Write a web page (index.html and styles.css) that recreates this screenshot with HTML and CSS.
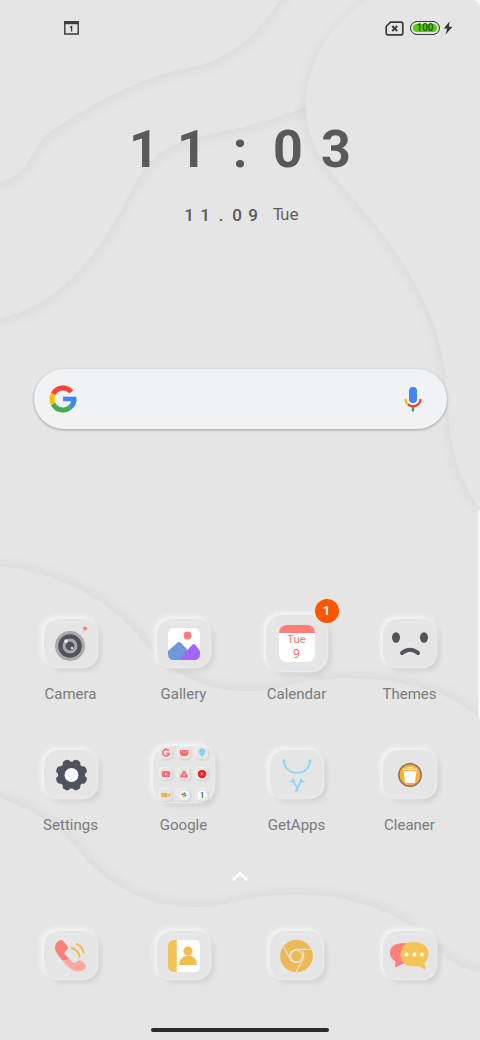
FILE: index.html
```html
<!DOCTYPE html>
<html lang="en">
<head>
<meta charset="utf-8">
<meta name="viewport" content="width=device-width, initial-scale=1">
<title>Home screen</title>
<link rel="stylesheet" href="styles.css">
</head>
<body>
<svg class="wallpaper" viewBox="0 0 480 1040" preserveAspectRatio="none" aria-hidden="true">
  <path class="wave wave-down" d="M-30-30H500V80C400 80 350 92 305 107C230 138 180 130 150 162C125 190 120 230 70 280Q38 310 0 318H-30Z"/>
  <path class="wave wave-down" d="M-30-30H296Q288-8 280 0C255 36 234 55 198 66C150 73 95 100 46 135C30 150 30 175 0 182H-30Z"/>
  <path class="wave wave-left" d="M510-30H400Q380-12 365 0C325 32 306 66 306 107C306 170 370 200 413 280C442 330 446 365 449 420C452 455 461 482 480 508H510Z"/>
  <path class="wave wave-up" d="M-30 562L0 566C65 575 108 600 140 638C180 690 240 700 290 685C360 668 450 685 480 720V1070H-30Z"/>
  <path class="wave wave-up" d="M-30 788L0 798C45 815 63 830 82 855C120 900 180 917 235 902C300 885 370 899 410 925C440 952 455 970 480 972H510V1070H-30Z"/>
  <path fill="#f5f5f5" d="M478 510h2v210l-2-4zM473 0h7v6q-2-5-7-6z"/>
</svg>

<div class="screen">
  <header class="status">
    <svg width="15" height="14" viewBox="0 0 15 14" role="img" aria-label="Calendar notification"><path d="M.8 1h13.400v12H.8z" fill="none" stroke="#3b3b3b" stroke-width="1.400"/><path d="M.2.2h14.600v3H.2z" fill="#3b3b3b"/><path d="M6 6.300l1.600-.7v5" fill="none" stroke="#3b3b3b" stroke-width="1.300"/></svg>
    <div class="status-right">
      <svg width="19" height="15" viewBox="0 0 19 15" role="img" aria-label="No SIM"><path d="M5.500 1.200H16q1.800 0 1.800 1.800v9q0 1.800-1.800 1.800H3q-1.800 0-1.800-1.800V5.500z" fill="none" stroke="#3b3b3b" stroke-width="1.700"/><path d="M7.200 5l5 5m0-5l-5 5" stroke="#3b3b3b" stroke-width="1.900"/></svg>
      <span class="battery">100</span>
      <svg width="10" height="14" viewBox="0 0 10 14" role="img" aria-label="Charging"><path d="M6.500.5L.8 7.500h3.400L2.600 13.500 9.500 5.800H5.900z" fill="#333"/></svg>
    </div>
  </header>

  <main>
    <section class="clock" aria-label="Clock">
      <time class="time"><span>1</span><span>1</span><span>:</span><span>0</span><span>3</span></time>
      <div class="date"><span class="digits"><span>1</span><span>1</span><span>.</span><span>0</span><span>9</span></span> <span class="weekday">Tue</span></div>
    </section>

    <form class="search">
      <svg width="28" height="28" viewBox="0 0 28 28" fill="none" stroke-width="5" aria-hidden="true"><path d="M22.400 6.900A11 11 0 0 0 4.200 9" stroke="#fa4336"/><path d="M4.200 9A11 11 0 0 0 4.200 19" stroke="#fbbc05"/><path d="M4.200 19A11 11 0 0 0 21.100 22.400" stroke="#43ac52"/><path d="M21.100 22.400A11 11 0 0 0 25 14" stroke="#4285f4"/><path d="M14 11.700h13.300v4.600H14z" fill="#4285f4" stroke="none"/></svg>
      <input type="search" aria-label="Search">
      <button type="button" aria-label="Voice search"><svg width="20" height="28" viewBox="0 0 20 28" fill="none"><rect x="6" y="2" width="8" height="16" rx="4" fill="#4285f4"/><path d="M2.500 14q0 3.500 2.500 5.500" stroke="#fbbc05" stroke-width="2.200"/><path d="M5 19.500q5 3.600 10 0 2.500-2 2.500-5.500" stroke="#ea4335" stroke-width="2.200"/><path d="M10 22v4.500" stroke="#34a853" stroke-width="2.400"/></svg></button>
    </form>

    <nav class="apps" aria-label="Apps">
      <button class="app"><span class="slot"><span class="tile">
        <svg viewBox="0 0 54 49"><circle cx="26" cy="27" r="15" fill="#aaa"/><circle cx="26" cy="27" r="11.800" fill="#50525a"/><circle cx="26" cy="27" r="7.500" fill="#a7a7a7"/><circle cx="26" cy="27" r="4.400" fill="#50525a"/><circle cx="22" cy="22" r="1.800" fill="#eee"/><circle cx="28" cy="29" r="1.300" fill="#ddd"/><circle cx="41" cy="9.500" r="2" fill="#fb7c78"/></svg>
      </span></span><span class="label">Camera</span></button>

      <button class="app"><span class="slot"><span class="tile">
        <svg viewBox="0 0 54 49"><rect x="11" y="9" width="32" height="32" rx="6" fill="#fff"/><circle cx="30.500" cy="16.500" r="3.900" fill="#f97c7a"/><path d="M11 32l9-8q2-2 4 0l9 9-8 8h-8q-6 0-6-6z" fill="#7197d8"/><path d="M23 41q1-3 4-6l8-9q2-2 3.500 0l4.500 6v3q0 6-6 6z" fill="#a066f7"/></svg>
      </span></span><span class="label">Gallery</span></button>

      <button class="app"><span class="slot"><span class="tile large">
        <span class="calendar"><span>Tue</span><span class="day">9</span></span>
      </span><span class="badge">1</span></span><span class="label">Calendar</span></button>

      <button class="app"><span class="slot"><span class="tile">
        <svg viewBox="0 0 54 49" fill="#50525c"><ellipse cx="13" cy="18.500" rx="4" ry="5.200"/><ellipse cx="41" cy="18.500" rx="4" ry="5.200"/><path d="M19 34q8-6.500 16 0" fill="none" stroke="#50525c" stroke-width="4" stroke-linecap="round"/></svg>
      </span></span><span class="label">Themes</span></button>

      <button class="app"><span class="slot"><span class="tile">
        <svg viewBox="0 0 54 49"><g fill="#50525c" transform="translate(27.500 25)"><circle r="13.500"/><rect x="-4" y="-16" width="8" height="32" rx="3.500" transform="rotate(22.500)"/><rect x="-4" y="-16" width="8" height="32" rx="3.500" transform="rotate(67.500)"/><rect x="-4" y="-16" width="8" height="32" rx="3.500" transform="rotate(112.500)"/><rect x="-4" y="-16" width="8" height="32" rx="3.500" transform="rotate(157.500)"/><circle r="7" fill="#f8fafc"/></g></svg>
      </span></span><span class="label">Settings</span></button>

      <button class="app"><span class="slot"><span class="tile large folder">
        <svg viewBox="0 0 12 12"><path d="M8.800 3.800A3.300 3.300 0 1 0 9.300 6.500H6.300" fill="none" stroke="#f76d70" stroke-width="1.600"/></svg>
        <svg viewBox="0 0 12 12"><path d="M2 3h8.500v3.500Q10 9 7.500 9H5Q2 9 2 6z" fill="#f76d70"/><path d="M3 4.500q3.300 2 6.500 0" stroke="#ffa1a0" fill="none"/></svg>
        <svg viewBox="0 0 12 12"><path d="M6 11V9Q3.200 6.500 3.200 4.700a2.800 2.800 0 0 1 5.600 0Q8.800 6.500 6 9" fill="#83cdfa" stroke="#83cdfa" stroke-width=".7"/><circle cx="6" cy="4.800" r="1" fill="#a5dcfc"/></svg>
        <svg viewBox="0 0 12 12"><rect x="1.800" y="3" width="8.400" height="6" rx="1.500" fill="#f76d70"/><path d="M5 4.500v3L7.500 6z" fill="#ffd9d9"/></svg>
        <svg viewBox="0 0 12 12"><path d="M6 3.500L9 8.500H3z" fill="none" stroke="#f76d70" stroke-width="2" stroke-linejoin="round"/></svg>
        <svg viewBox="0 0 12 12"><circle cx="6" cy="6" r="4" fill="#f60c12"/><circle cx="6" cy="6" r="2" fill="none" stroke="#ff7776" stroke-width=".6"/><path d="M5.200 4.800v2.400L7.200 6z" fill="#fff"/></svg>
        <svg viewBox="0 0 12 12"><path d="M1.500 4h6v4.200h-6zM8 5.600L10.500 4v4L8 6.700z" fill="#ebb551"/></svg>
        <svg viewBox="0 0 12 12"><circle cx="6" cy="6" r="4.500" fill="#fff"/><path d="M6 6V3l2.500 2z" fill="#34a853"/><path d="M6 6h3L7 8.500z" fill="#4285f4"/><path d="M6 6v3L3.500 7z" fill="#fbbc05"/><path d="M6 6H3l2-2.500z" fill="#ea4335"/></svg>
        <svg viewBox="0 0 12 12"><circle cx="6" cy="6" r="4.500" fill="#fff"/><path d="M4.700 4.300L6.200 3.500" stroke="#fbbc05" stroke-width="1.400"/><path d="M6.400 3v3" stroke="#4285f4" stroke-width="1.500"/><path d="M6.400 6v3" stroke="#34a853" stroke-width="1.500"/></svg>
      </span></span><span class="label">Google</span></button>

      <button class="app"><span class="slot"><span class="tile">
        <svg viewBox="0 0 54 49" fill="none" stroke="#8bd4fc" stroke-width="1.700" stroke-linecap="round"><path d="M14 11a13 12 0 0 0 26 0"/><circle cx="14" cy="11" r=".8"/><circle cx="40" cy="11" r=".8"/><path d="M23 30.500l4.500 8M31.500 30.500l-5 9.500M20.500 31.500l3 .5v-3M34 31.500l-3 .5v-3M25.800 40.500h2"/></svg>
      </span></span><span class="label">GetApps</span></button>

      <button class="app"><span class="slot"><span class="tile">
        <svg viewBox="0 0 54 49"><circle cx="27" cy="25" r="11.200" fill="#fbb034" stroke="#8d706b" stroke-width="1.500"/><path d="M20.500 21L22 32q.2 1 1.200 1h7.600q1 0 1.200-1l1.500-11z" fill="#fff"/><path d="M20 19.400h14M24 17.700h6" stroke="#fff1d5" stroke-width="1.200"/></svg>
      </span></span><span class="label">Cleaner</span></button>
    </nav>

    <button class="drawer" aria-label="Open app drawer"><svg width="18" height="12" viewBox="0 0 18 12"><path d="M2.500 9.500L9 3l6.500 6.500" fill="none" stroke="#fff" stroke-width="2.600" stroke-linecap="round"/></svg></button>
  </main>

  <nav class="dock" aria-label="Dock">
    <button class="app" aria-label="Phone"><span class="slot"><span class="tile">
      <svg viewBox="0 0 54 49"><path d="M14.500 10q2.500-2 4.500 0l4 4.500q1.500 2 0 4l-2 2q-1.200 1.500 0 3l6 6H18.500q-6.500-7-7.500-12-.5-5 3.500-7.500z" fill="#fd7f7a"/><path d="M18.500 29.500L25 27.500l4 4q1.500 1.200 3 0l2-1.500q2-1.500 4 0l3.500 4q1.500 2-.5 4-7 5-14 0-5.500-4-8.500-8.500z" fill="#fda7a3"/><path d="M28 17q6.500 2 7.500 8.500M32.500 13q6 2.500 7 8.500" fill="none" stroke="#ecba58" stroke-width="1.900" stroke-linecap="round"/></svg>
    </span></span></button>
    <button class="app" aria-label="Contacts"><span class="slot"><span class="tile">
      <svg viewBox="0 0 54 49"><rect x="11" y="9" width="32" height="32" rx="5.500" fill="#fff"/><path d="M19.800 9v32H17q-6 0-6-6V15q0-6 6-6z" fill="#f3c35b"/><circle cx="31" cy="20" r="4.600" fill="#f1bd53"/><path d="M22 34q.5-9 9-9.500 9 .5 9 9.500z" fill="#f1bd53"/></svg>
    </span></span></button>
    <button class="app" aria-label="Chrome"><span class="slot"><span class="tile">
      <svg viewBox="0 0 54 49"><circle cx="26.500" cy="25" r="16.300" fill="#ecb957"/><g fill="none" stroke="#e7e0d2" stroke-width="1.300"><circle cx="26.500" cy="25" r="5.800"/><path d="M42 18.300H26.500q-7 1-7 8M13.500 15.500L20 28q3 4.500 9 3.200M33 20q2 6-2 11.400L26 41.200"/></g></svg>
    </span></span></button>
    <button class="app" aria-label="Messages"><span class="slot"><span class="tile">
      <svg viewBox="0 0 54 49"><path d="M21 12q8 0 8 10t-9 11l-8 3.500.5-6Q7 27 7 22q0-10 14-10z" fill="#fd7f7a"/><path d="M31.500 11Q45.500 12 45.500 23.500 45 29 41.500 32l1 7-7-4q-18 2-18-11.500Q18 11 31.500 11z" fill="#f4c456"/><g fill="#fff"><circle cx="23.500" cy="23.500" r="1.900"/><circle cx="31.500" cy="23.500" r="1.900"/><circle cx="39" cy="23.500" r="1.900"/></g></svg>
    </span></span></button>
  </nav>
  <div class="home-bar"></div>
</div>
</body>
</html>
```

FILE: styles.css
```css
* { box-sizing: border-box; }

body {
  margin: 0;
  background: #e5e5e5;
  color: #7b7b7b;
  font-family: Roboto, "Liberation Sans", sans-serif;
}

button {
  padding: 0;
  border: 0;
  background: none;
  color: inherit;
  font: inherit;
}

svg { display: block; }

.wallpaper {
  position: absolute;
  inset: 0;
  width: 100%;
  height: 100%;
}

.wave { fill: #e5e5e5; }
.wave-down { filter: drop-shadow(2px 4px 6px rgba(0, 0, 0, .04)); }
.wave-left { filter: drop-shadow(-3px 2px 6px rgba(0, 0, 0, .04)); }
.wave-up { filter: drop-shadow(2px -4px 6px rgba(0, 0, 0, .04)); }

.screen {
  position: relative;
  display: flex;
  flex-direction: column;
  min-height: 100vh;
  padding-bottom: 8px;
}

.status {
  display: flex;
  justify-content: space-between;
  align-items: center;
  height: 56px;
  padding: 0 27px 0 64px;
}

.status-right {
  display: flex;
  align-items: center;
  gap: 6px;
}

.battery {
  width: 30px;
  height: 14px;
  border: 1px solid #3b3b3b;
  border-radius: 7px;
  background: #55cc10;
  box-shadow: inset 0 0 0 2px #e5e5e5;
  color: #235006;
  font-size: 10px;
  font-weight: 500;
  line-height: 12px;
  text-align: center;
}

.battery + svg { margin-left: -3px; }

.clock {
  display: flex;
  flex-direction: column;
  align-items: center;
  gap: 24px;
  padding-top: 64px;
  color: #595959;
}

.time {
  display: grid;
  grid-template-columns: repeat(5, 48px);
  font-size: 52px;
  font-weight: 700;
  line-height: 60px;
  text-align: center;
}

.date {
  display: flex;
  gap: 12px;
  font-size: 17px;
  font-weight: 500;
  line-height: 22px;
}

.digits {
  display: grid;
  grid-template-columns: repeat(5, 16px);
  text-align: center;
}

.weekday {
  font-family: "DejaVu Sans", sans-serif;
  font-size: 15px;
  font-weight: 400;
}

.search {
  display: flex;
  align-items: center;
  height: 60px;
  margin: 143px 33px 0 34px;
  padding: 0 24px 0 15px;
  border-radius: 30px;
  background: #f1f2f4;
  box-shadow: 0 1px 3px rgba(0, 0, 0, .3);
}

.search input {
  flex: 1;
  min-width: 0;
  height: 40px;
  border: 0;
  outline: 0;
  background: none;
  font: inherit;
}

.apps,
.dock {
  display: grid;
  grid-template-columns: repeat(4, 1fr);
  padding: 0 14px;
}

.apps {
  row-gap: 41px;
  margin-top: 185px;
}

.app {
  display: flex;
  flex-direction: column;
  align-items: center;
  gap: 12px;
}

.slot {
  position: relative;
  display: flex;
  align-items: center;
  justify-content: center;
  width: 62px;
  height: 58px;
}

.tile {
  width: 54px;
  height: 49px;
  border-radius: 15px;
  background: #e5e5e5;
  box-shadow: -2px -2px 4px 1px #f4f4f4, 3px 3px 5px rgba(0, 0, 0, .09), inset -1px -1px 1px #ebebeb;
}

.tile.large {
  display: flex;
  align-items: center;
  justify-content: center;
  width: 62px;
  height: 57px;
  border-radius: 17px;
}

.tile.folder {
  display: grid;
  grid-template-columns: repeat(3, 12px);
  gap: 6px;
}

.folder svg {
  width: 12px;
  height: 12px;
  border-radius: 4px;
  box-shadow: -1px -1px 1px #f1f1f1, 1px 1px 2px rgba(0, 0, 0, .09);
}

.calendar {
  display: flex;
  flex-direction: column;
  align-items: center;
  width: 36px;
  height: 37px;
  border-top: 8px solid #fd7f78;
  border-radius: 8px;
  background: #fff;
  color: #f9746e;
  font-size: 11px;
  line-height: 14px;
}

.day { font-size: 13px; }

.badge {
  position: absolute;
  top: -15px;
  right: -11px;
  width: 24px;
  height: 24px;
  border-radius: 12px;
  background: #fe5500;
  color: #fff;
  font-size: 13px;
  font-weight: 700;
  line-height: 24px;
  text-align: center;
}

.label {
  font-size: 15px;
  line-height: 20px;
}

.drawer {
  display: block;
  margin: 35px auto 0;
}

.dock { margin-top: 44px; }

.home-bar {
  width: 37%;
  height: 4px;
  margin: auto auto 0;
  border-radius: 2px;
  background: #2b2b2b;
}
```
